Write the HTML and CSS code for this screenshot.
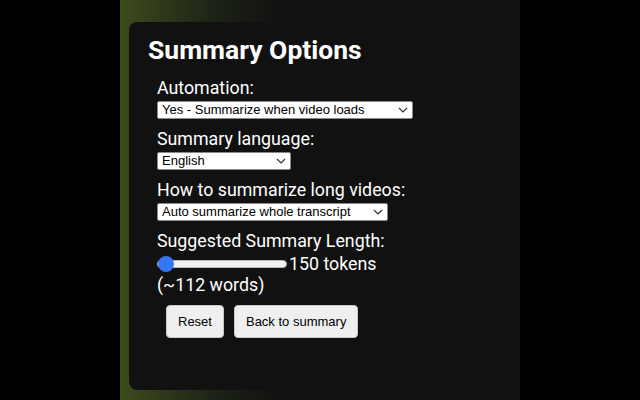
FILE: index.html
```html
<!DOCTYPE html>
<html>
<head>
<meta charset="utf-8">
<link rel="stylesheet" href="styles.css">
</head>
<body>
<div class="frame">
  <div class="panel">
    <h1 class="title">Summary Options</h1>
    <div class="form">
      <div class="group">
        <label class="label">Automation:</label>
        <div class="select-wrap w1">
          <select class="select"><option>Yes - Summarize when video loads</option></select>
          <svg class="chev" width="10" height="6" viewBox="0 0 10 6"><path d="M1 1 L5 5 L9 1" fill="none" stroke="#333" stroke-width="1.2"/></svg>
        </div>
      </div>
      <div class="group">
        <label class="label">Summary language:</label>
        <div class="select-wrap w2">
          <select class="select"><option>English</option></select>
          <svg class="chev" width="10" height="6" viewBox="0 0 10 6"><path d="M1 1 L5 5 L9 1" fill="none" stroke="#333" stroke-width="1.2"/></svg>
        </div>
      </div>
      <div class="group">
        <label class="label">How to summarize long videos:</label>
        <div class="select-wrap w3">
          <select class="select"><option>Auto summarize whole transcript</option></select>
          <svg class="chev" width="10" height="6" viewBox="0 0 10 6"><path d="M1 1 L5 5 L9 1" fill="none" stroke="#333" stroke-width="1.2"/></svg>
        </div>
      </div>
      <div class="group last">
        <label class="label">Suggested Summary Length:</label>
        <div class="slider-row">
          <input class="range" type="range" min="50" max="1000" value="50">
          <span class="tokens">150 tokens</span>
        </div>
        <div class="words">(~112 words)</div>
      </div>
      <div class="buttons">
        <button class="btn">Reset</button>
        <button class="btn">Back to summary</button>
      </div>
    </div>
  </div>
</div>
</body>
</html>
```
FILE: styles.css
```css
html, body {
  margin: 0;
  padding: 0;
  background: #000;
}
body {
  display: flex;
  justify-content: center;
  width: 640px;
  height: 400px;
  overflow: hidden;
}
.frame {
  width: 400px;
  height: 400px;
  overflow: hidden;
  background: linear-gradient(90deg, #3e4c1d 0px, #2f3a1a 40px, #1c2116 100px, #111 160px);
}
.panel {
  margin-left: 9px;
  margin-top: 22px;
  width: 420px;
  height: 368px;
  box-sizing: border-box;
  background: #111;
  border-radius: 8px;
  padding: 11px 0 0 19px;
  color: #fff;
  font-family: Roboto, "Liberation Sans", sans-serif;
}
.title {
  margin: 0 0 9px 0;
  font-size: 26.5px;
  line-height: 34px;
  font-weight: 700;
}
.form {
  padding-left: 9px;
}
.group {
  margin-bottom: 8px;
}
.label {
  display: block;
  font-size: 17.8px;
  line-height: 24px;
}
.select-wrap {
  position: relative;
  margin-top: 1px;
  height: 18px;
}
.w1 { width: 256px; }
.w2 { width: 134px; }
.w3 { width: 231px; }
.select {
  -webkit-appearance: none;
  appearance: none;
  display: block;
  width: 100%;
  height: 18px;
  box-sizing: border-box;
  margin: 0;
  padding: 0 0 0 4px;
  border: 1px solid #8a8a8a;
  border-radius: 2px;
  background: #fff;
  color: #000;
  font-family: "Liberation Sans", Arial, sans-serif;
  font-size: 13px;
  line-height: 16px;
}
.chev {
  position: absolute;
  right: 5px;
  top: 6px;
}
.group.last {
  margin-bottom: 0;
}
.slider-row {
  display: flex;
  align-items: center;
  height: 22px;
}
.range {
  -webkit-appearance: none;
  appearance: none;
  width: 130px;
  height: 16px;
  margin: 0 2px 0 0;
  background: transparent;
}
.range::-webkit-slider-runnable-track {
  height: 8px;
  background: #efefef;
  border: 1px solid #b5b5b5;
  border-radius: 4px;
  box-sizing: border-box;
}
.range::-webkit-slider-thumb {
  -webkit-appearance: none;
  width: 16px;
  height: 16px;
  border-radius: 50%;
  background: #3478f6;
  border: none;
  margin-top: -5px;
}
.tokens {
  font-size: 17.8px;
  line-height: 22px;
}
.words {
  font-size: 17.8px;
  line-height: 20px;
}
.buttons {
  display: flex;
  gap: 10px;
  padding-left: 9px;
  margin-top: 10px;
}
.btn {
  height: 33px;
  padding: 0 11px;
  background: #efefef;
  border: 1px solid #c8c8c8;
  border-radius: 4px;
  color: #000;
  font-family: "Liberation Sans", Arial, sans-serif;
  font-size: 13px;
}
```
